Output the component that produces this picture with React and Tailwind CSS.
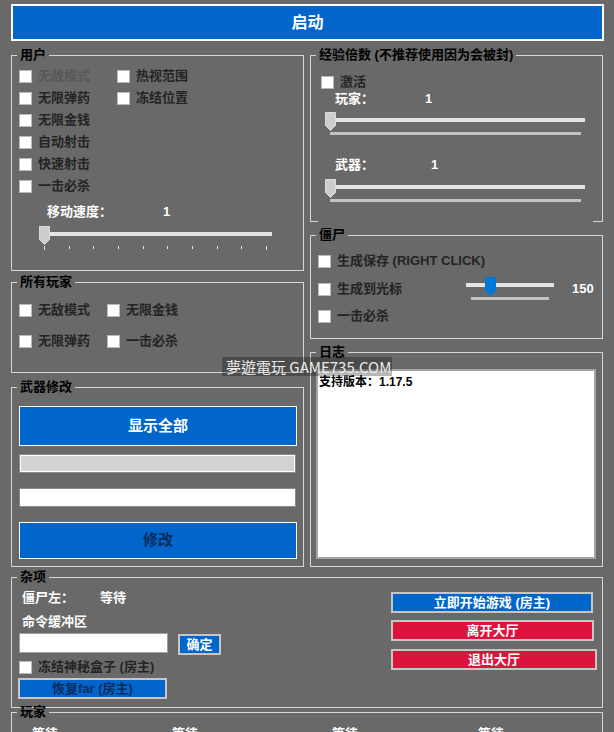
import React from 'react';

const FONT = "font-['Liberation_Sans','Noto_Sans_CJK_SC',sans-serif]";

function Group({ title, className = '', children }) {
  return (
    <fieldset className={`border border-[#d6d6d6] ${className}`}>
      <legend className="ml-[5px] px-[3px] h-[14px] leading-[14px] text-[13px] font-bold text-black">
        {title}
      </legend>
      {children}
    </fieldset>
  );
}

function Check({ label, dim, className = '' }) {
  return (
    <label className={`flex items-center gap-[6px] h-[22px] ${className}`}>
      <span className="w-[13px] h-[13px] shrink-0 bg-white border border-[#b9b9b9]" />
      <span className={`text-[13px] font-bold whitespace-nowrap ${dim ? 'text-[#585858]' : 'text-[#242424]'}`}>
        {label}
      </span>
    </label>
  );
}

function Thumb({ className = '', fill = '#cdcdcd', edge = '#dcdcdc' }) {
  return (
    <svg width="11" height="19" viewBox="0 0 11 19" className={`absolute top-0 ${className}`}>
      <path d="M0.5 0.5H10.5V13.5L5.5 18.5L0.5 13.5Z" fill={fill} stroke={edge} />
    </svg>
  );
}

// wide slider with the grey bar below (经验倍数)
function BarSlider() {
  return (
    <div className="relative ml-[4px] w-[262px] h-[24px]">
      <div className="absolute left-[5px] top-[6px] w-[255px] h-[4px] bg-[#e4e4e4]" />
      <div className="absolute left-[5px] top-[20px] w-[251px] h-[3px] bg-[#c3c3c3]" />
      <Thumb className="left-0" />
    </div>
  );
}

function ValueRow({ label, value, valueAt }) {
  return (
    <div className="flex h-[14px] leading-[14px] text-[13px] font-bold text-white ml-[14px]">
      <span className={valueAt}>{label}</span>
      <span>{value}</span>
    </div>
  );
}

function Btn({ children, className = '' }) {
  return (
    <button className={`flex items-center justify-center border-2 border-[#c6c6c6] text-[13px] font-bold leading-none ${className}`}>
      {children}
    </button>
  );
}

export default function App() {
  const ticks = Array.from({ length: 10 });

  return (
    <div className={`relative w-[614px] h-[732px] overflow-hidden bg-[#696969] ${FONT}`}>
      <div className="pt-[4px] pl-[11px]">
        <button className="w-[593px] h-[37px] bg-[#0066cc] border-2 border-white text-white text-[16px] font-bold">
          启动
        </button>
      </div>

      <div className="flex gap-[6px] pl-[11px] mt-[7px]">
        {/* left column */}
        <div className="flex flex-col w-[293px]">
          <Group title="用户" className="h-[223px]">
            <div className="pl-[7px] pt-[3px]">
              <div className="flex">
                <div className="flex flex-col w-[98px]">
                  <Check label="无敌模式" dim />
                  <Check label="无限弹药" />
                  <Check label="无限金钱" />
                  <Check label="自动射击" />
                  <Check label="快速射击" />
                  <Check label="一击必杀" />
                </div>
                <div className="flex flex-col">
                  <Check label="热视范围" />
                  <Check label="冻结位置" />
                </div>
              </div>
              <div className="mt-[6px] ml-[28px] flex h-[18px] items-center text-[13px] font-bold text-white">
                <span className="w-[116px]">移动速度：</span>
                <span>1</span>
              </div>
              <div className="relative mt-[5px] ml-[20px] w-[240px] h-[26px]">
                <div className="absolute left-[8px] top-[6px] w-[225px] h-[4px] bg-[#e4e4e4]" />
                <div className="absolute left-[5px] top-[20px] w-[223px] flex justify-between items-start">
                  {ticks.map((_, i) => (
                    <span
                      key={i}
                      className={`w-[1px] bg-[#e6e6e6] ${i === 0 || i === 9 ? 'h-[4px]' : 'h-[3px]'}`}
                    />
                  ))}
                </div>
                <Thumb className="left-0" />
              </div>
            </div>
          </Group>

          <Group title="所有玩家" className="h-[98px] mt-[4px]">
            <div className="pl-[7px] mt-[10px] grid grid-cols-[88px_1fr] gap-y-[9px]">
              <Check label="无敌模式" />
              <Check label="无限金钱" />
              <Check label="无限弹药" />
              <Check label="一击必杀" />
            </div>
          </Group>

          <Group title="武器修改" className="h-[187px] mt-[7px]">
            <div className="pl-[7px] flex flex-col">
              <button className="mt-[12px] w-[278px] h-[40px] bg-[#0066cc] border border-white text-white text-[15px] font-bold">
                显示全部
              </button>
              <div className="mt-[8px] w-[277px] h-[19px] bg-[#d3d3d3] border border-[#8a8a8a] shadow-[inset_0_0_0_1px_#ffffff]" />
              <div className="mt-[15px] w-[277px] h-[19px] bg-white border border-[#8a8a8a]" />
              <button className="mt-[15px] w-[278px] h-[37px] bg-[#0066cc] border border-white text-[#0c2a5c] text-[15px] font-bold">
                修改
              </button>
            </div>
          </Group>
        </div>

        {/* right column */}
        <div className="flex flex-col w-[293px]">
          <Group title="经验倍数 (不推荐使用因为会被封)" className="h-[174px] border-b-0">
            <div className="h-[160px] flex flex-col pl-[10px]">
              <div className="mt-[10px] h-[20px] flex items-center">
                <Check label="激活" className="h-[20px]" />
              </div>
              <ValueRow label="玩家：" value="1" valueAt="w-[90px]" />
              <div className="mt-[6px]">
                <BarSlider />
              </div>
              <div className="mt-[22px]">
                <ValueRow label="武器：" value="1" valueAt="w-[96px]" />
              </div>
              <div className="mt-[7px]">
                <BarSlider />
              </div>
              <div className="mt-auto -ml-[10px] flex justify-between h-[1px]">
                <span className="w-[7px] bg-[#d6d6d6]" />
                <span className="w-[9px] bg-[#d6d6d6]" />
              </div>
            </div>
          </Group>

          <Group title="僵尸" className="h-[111px] mt-[6px]">
            <div className="pl-[7px] flex flex-col">
              <Check label="生成保存 (RIGHT CLICK)" className="mt-[8px]" />
              <div className="mt-[6px] flex items-start h-[22px]">
                <Check label="生成到光标" className="w-[148px]" />
                <div className="relative -mt-[1px] w-[88px] h-[24px]">
                  <div className="absolute left-0 top-[6px] w-[88px] h-[4px] bg-[#e4e4e4]" />
                  <div className="absolute left-[5px] top-[20px] w-[78px] h-[3px] bg-[#c3c3c3]" />
                  <Thumb className="left-[19px]" fill="#0078d7" edge="#0078d7" />
                </div>
                <span className="ml-[18px] h-[22px] flex items-center text-[13px] font-bold text-white">150</span>
              </div>
              <Check label="一击必杀" className="mt-[5px]" />
            </div>
          </Group>

          <Group title="日志" className="h-[222px] mt-[6px]">
            <div className="pl-[5px] mt-[10px]">
              <div className="w-[280px] h-[190px] bg-white border-2 border-[#a3a3a3] px-[1px] pt-[3px]">
                <div className="h-[16px] leading-[16px] text-[12px] font-bold text-black">支持版本：1.17.5</div>
              </div>
            </div>
          </Group>
        </div>
      </div>

      <div className="pl-[11px] mt-[3px]">
        <Group title="杂项" className="w-[592px] h-[138px]">
          <div className="flex pl-[7px]">
            <div className="w-[372px] flex flex-col">
              <div className="mt-[6px] ml-[3px] h-[16px] flex items-center text-[13px] font-bold text-white">
                <span className="w-[78px]">僵尸左：</span>
                <span>等待</span>
              </div>
              <div className="mt-[8px] ml-[3px] h-[16px] flex items-center text-[13px] font-bold text-white">
                命令缓冲区
              </div>
              <div className="mt-[3px] flex items-start h-[21px]">
                <div className="w-[149px] h-[20px] bg-white border border-[#a0a0a0]" />
                <Btn className="ml-[10px] mt-[1px] w-[43px] h-[21px] bg-[#0066cc] text-white">确定</Btn>
              </div>
              <Check label="冻结神秘盒子 (房主)" className="mt-[2px]" />
              <Btn className="-ml-[1px] w-[149px] h-[21px] bg-[#0066cc] text-[#0c2a5c]">恢复far (房主)</Btn>
            </div>
            <div className="flex flex-col">
              <Btn className="mt-[8px] w-[202px] h-[21px] bg-[#0066cc] text-white">立即开始游戏 (房主)</Btn>
              <Btn className="mt-[7px] w-[203px] h-[21px] bg-[#dc143c] text-white">离开大厅</Btn>
              <Btn className="mt-[8px] w-[206px] h-[21px] bg-[#dc143c] text-white">退出大厅</Btn>
            </div>
          </div>
        </Group>
        <Group title="玩家" className="w-[592px] h-[60px] -mt-[3px]">
          <div className="mt-[7px] flex text-[13px] font-bold text-white h-[16px] leading-[16px]">
            <span className="ml-[20px] w-[140px]">等待</span>
            <span className="w-[160px]">等待</span>
            <span className="w-[146px]">等待</span>
            <span>等待</span>
          </div>
        </Group>
      </div>

      {/* watermark over the page */}
      <div className="absolute left-[222px] top-[357px] w-[170px] h-[19px] bg-[rgba(0,0,0,0.28)] flex items-center pl-[4px] text-[15px] leading-none text-[#ececec] font-['Noto_Sans_CJK_TC','Noto_Sans',sans-serif] whitespace-nowrap">
        夢遊電玩 GAME735.COM
      </div>
    </div>
  );
}
